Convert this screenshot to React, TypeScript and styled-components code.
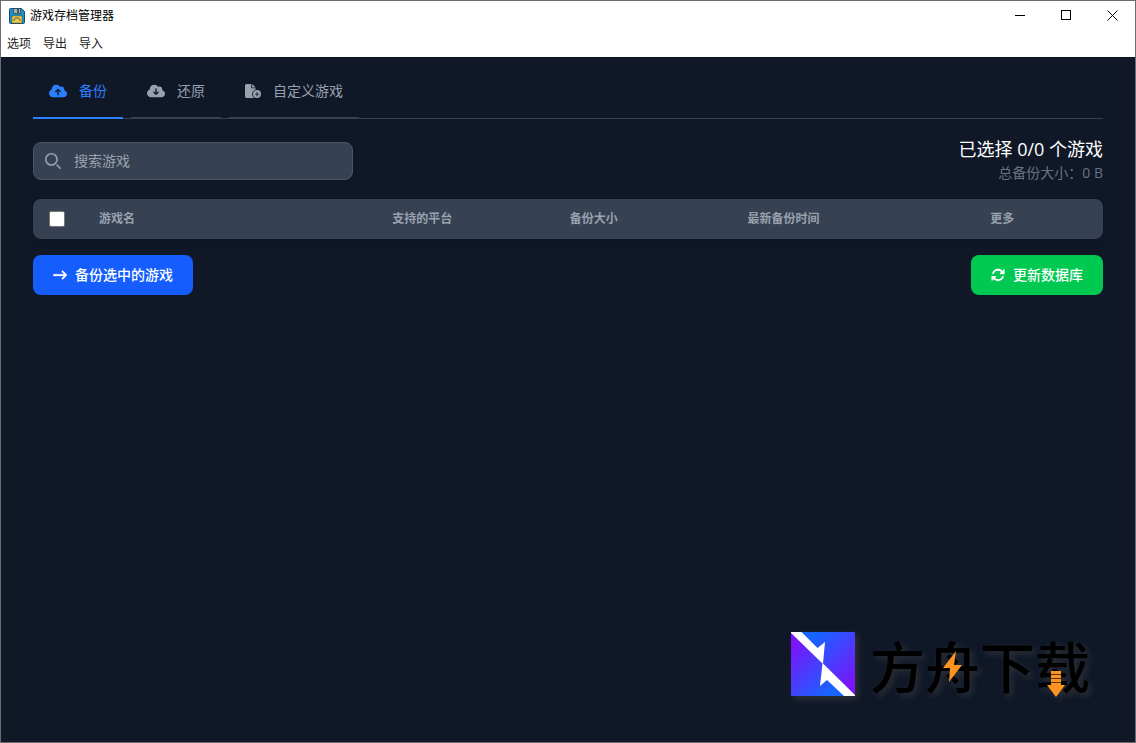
import React from 'react';
import styled, { createGlobalStyle } from 'styled-components';
import { FaCloudArrowUp, FaCloudArrowDown, FaFileCirclePlus, FaArrowRightLong, FaRotate } from 'react-icons/fa6';

const GlobalStyle = createGlobalStyle`
  *, *::before, *::after { box-sizing: border-box; }
  body {
    margin: 0;
    background: #101828;
    font-family: "Open Sans", "Noto Sans CJK SC", sans-serif;
    font-size: 14px;
    line-height: 20px;
  }
  button, input { font: inherit; }
`;

const Window = styled.div`
  position: relative;
  display: flex;
  flex-direction: column;
  min-height: 100vh;
  border: 1px solid #6c6c6c;
  background: #101828;
`;

const TitleBar = styled.header`
  display: flex;
  align-items: center;
  height: 29px;
  padding-left: 8px;
  background: #fff;
`;

const Title = styled.h1`
  flex: 1;
  margin: 0 0 0 5px;
  color: #000;
  font-size: 12px;
  font-weight: 400;
  line-height: 18px;
`;

const WindowButton = styled.button`
  display: flex;
  align-items: center;
  justify-content: center;
  width: 46px;
  height: 29px;
  padding: 0;
  border: 0;
  background: transparent;
`;

const MenuBar = styled.nav`
  display: flex;
  align-items: center;
  gap: 12px;
  height: 27px;
  padding: 0 6px;
  background: #fff;
`;

const MenuItem = styled.button`
  padding: 0;
  border: 0;
  background: transparent;
  color: #222;
  font-size: 12px;
  line-height: 18px;
`;

const Main = styled.main`
  flex: 1;
  padding: 8px 32px 32px;
`;

const TabList = styled.div`
  display: flex;
  gap: 8px;
  margin-bottom: 16px;
  border-bottom: 1px solid #364153;
`;

const Tab = styled.button<{ $active?: boolean; $iconWidth: number }>`
  display: flex;
  align-items: center;
  gap: 12px;
  margin-bottom: -1px;
  padding: 16px;
  border: 0;
  border-bottom: 2px solid ${(p) => (p.$active ? '#2b7fff' : '#364153')};
  background: transparent;
  color: ${(p) => (p.$active ? '#2b7fff' : '#99a1af')};
  white-space: nowrap;

  svg {
    flex: none;
    width: ${(p) => p.$iconWidth}px;
    height: 16px;
  }
`;

const Toolbar = styled.div`
  display: flex;
  align-items: center;
  justify-content: space-between;
  margin-bottom: 16px;
`;

const SearchBox = styled.label`
  display: flex;
  align-items: center;
  gap: 13px;
  width: 320px;
  height: 38px;
  margin-top: 4px;
  padding: 0 11px;
  border: 1px solid #4a5565;
  border-radius: 8px;
  background: #364153;
  color: #99a1af;
`;

const SearchInput = styled.input`
  flex: 1;
  min-width: 0;
  padding: 0;
  border: 0;
  outline: 0;
  background: transparent;
  color: #fff;

  &::placeholder { color: #99a1af; opacity: 1; }
`;

const Summary = styled.div`
  text-align: right;
`;

const Selected = styled.p`
  margin: 0;
  color: #fff;
  font-size: 18px;
  line-height: 28px;
`;

const TotalSize = styled.p`
  margin: 0;
  color: #6a7282;
`;

const GameTable = styled.table`
  width: 100%;
  margin-bottom: 16px;
  border-collapse: collapse;
  table-layout: fixed;
  border-radius: 8px;
  background: #364153;
  box-shadow: 0 4px 6px rgba(0, 0, 0, 0.15);
`;

const HeadCell = styled.th<{ $width?: string }>`
  width: ${(p) => p.$width ?? 'auto'};
  height: 40px;
  padding: 0 16px;
  color: #99a1af;
  font-size: 12px;
  font-weight: 700;
  line-height: 16px;
  text-align: left;
`;

const Checkbox = styled.input`
  display: block;
  appearance: none;
  width: 16px;
  height: 16px;
  margin: 0;
  border: 1px solid #767676;
  border-radius: 2px;
  background: #fff;

  &:checked { background: #155dfc; }
`;

const Actions = styled.div`
  display: flex;
  justify-content: space-between;
`;

const ActionButton = styled.button<{ $color: string }>`
  display: flex;
  align-items: center;
  gap: 8px;
  height: 40px;
  padding: 0 20px;
  border: 0;
  border-radius: 8px;
  background: ${(p) => p.$color};
  color: #fff;
  font-weight: 500;
`;

const Watermark = styled.div`
  position: absolute;
  right: 45px;
  bottom: 46px;
  display: flex;
  gap: 15px;
  filter: drop-shadow(3px 3px 3px rgba(120, 110, 90, 0.28));
`;

const Wordmark = styled.div`
  position: relative;
  color: #000;
  font-family: "Noto Sans CJK SC", sans-serif;
  font-size: 55px;
  font-weight: 500;
  line-height: 64px;
  white-space: nowrap;
`;

const WordmarkAccents = styled.svg`
  position: absolute;
  top: 0;
  left: 0;
`;

const DiskIcon = () => (
  <svg width="16" height="16" viewBox="0 0 16 16" aria-hidden="true">
    <path d="M1.500 .5h11l3 3v11a1 1 0 0 1-1 1h-13a1 1 0 0 1-1-1v-13a1 1 0 0 1 1-1z" fill="#1790c8" stroke="#17506f" />
    <path d="M4 1h8v5H4z" fill="#4b5a61" />
    <path d="M5 1h3v4H5zM10 1h1v4h-1z" fill="#a9b3b6" />
    <path d="M3 8h10v7H3z" fill="#f0cf45" stroke="#6b5b25" strokeWidth=".6" />
    <path d="M5 13c0-4 6-4 6 0" fill="none" stroke="#8d8350" strokeWidth="1.500" />
  </svg>
);

const SearchIcon = () => (
  <svg width="16" height="16" viewBox="0 0 20 20" fill="none" stroke="currentColor" strokeWidth="2" strokeLinecap="round" aria-hidden="true">
    <path d="m19 19-4-4m0-7A7 7 0 1 1 1 8a7 7 0 0 1 14 0Z" />
  </svg>
);

const LogoMark = () => (
  <svg width="64" height="64" viewBox="0 0 64 64" aria-hidden="true">
    <defs>
      <linearGradient id="upper" gradientUnits="userSpaceOnUse" x1="14" y1="0" x2="64" y2="50">
        <stop offset=".15" stopColor="#1764ff" />
        <stop offset="1" stopColor="#7b14fa" />
      </linearGradient>
      <linearGradient id="lower" gradientUnits="userSpaceOnUse" x1="0" y1="14" x2="50" y2="64">
        <stop offset="0" stopColor="#7b14fa" />
        <stop offset=".85" stopColor="#1764ff" />
      </linearGradient>
    </defs>
    <path d="M0 0h64v64z" fill="url(#upper)" />
    <path d="M0 0v64h64z" fill="url(#lower)" />
    <path d="M0 0h10.500l16 16L34 10l-2 21.500L64 63v1H53L36 48l-7 6 2.500-22.500L0 1z" fill="#fff" />
  </svg>
);

const columns = [
  { label: '游戏名', width: '27.4%' },
  { label: '支持的平台', width: '16.6%' },
  { label: '备份大小', width: '16.6%' },
  { label: '最新备份时间', width: '22.7%' },
  { label: '更多' },
];

export default function App() {
  return (
    <>
      <GlobalStyle />
      <Window>
        <TitleBar>
          <DiskIcon />
          <Title>游戏存档管理器</Title>
          <WindowButton aria-label="最小化">
            <svg width="11" height="11" shapeRendering="crispEdges"><path d="M0 5.500h10" stroke="#000" /></svg>
          </WindowButton>
          <WindowButton aria-label="最大化">
            <svg width="11" height="11" shapeRendering="crispEdges"><path d="M.5 .5h9v9h-9z" fill="none" stroke="#000" /></svg>
          </WindowButton>
          <WindowButton aria-label="关闭">
            <svg width="11" height="11"><path d="M.5 .5l10 10M10.500 .5l-10 10" stroke="#000" /></svg>
          </WindowButton>
        </TitleBar>
        <MenuBar>
          <MenuItem>选项</MenuItem>
          <MenuItem>导出</MenuItem>
          <MenuItem>导入</MenuItem>
        </MenuBar>
        <Main>
          <TabList role="tablist">
            <Tab role="tab" aria-selected="true" $active $iconWidth={18}><FaCloudArrowUp />备份</Tab>
            <Tab role="tab" aria-selected="false" $iconWidth={18}><FaCloudArrowDown />还原</Tab>
            <Tab role="tab" aria-selected="false" $iconWidth={16}><FaFileCirclePlus />自定义游戏</Tab>
          </TabList>
          <Toolbar>
            <SearchBox>
              <SearchIcon />
              <SearchInput type="text" placeholder="搜索游戏" aria-label="搜索游戏" />
            </SearchBox>
            <Summary>
              <Selected>已选择 0/0 个游戏</Selected>
              <TotalSize>总备份大小：0 B</TotalSize>
            </Summary>
          </Toolbar>
          <GameTable>
            <thead>
              <tr>
                <HeadCell $width="50px"><Checkbox type="checkbox" aria-label="全选" /></HeadCell>
                {columns.map((c) => (
                  <HeadCell key={c.label} $width={c.width} scope="col">{c.label}</HeadCell>
                ))}
              </tr>
            </thead>
          </GameTable>
          <Actions>
            <ActionButton $color="#155dfc"><FaArrowRightLong strokeWidth={10} />备份选中的游戏</ActionButton>
            <ActionButton $color="#00c951"><FaRotate />更新数据库</ActionButton>
          </Actions>
        </Main>
        <Watermark>
          <LogoMark />
          <Wordmark>
            方舟下载
            <WordmarkAccents width="220" height="68" viewBox="0 0 220 68" aria-hidden="true">
              <path d="M86 19L73 36h7l-1 14 13-17h-8z" fill="#ff9320" />
              <path d="M181 39h10v14h4l-9 12-9-12h4z" fill="#ff9320" />
              <path d="M181 42.500h10M181 46.500h10M181 50.500h10" stroke="#5a3208" />
            </WordmarkAccents>
          </Wordmark>
        </Watermark>
      </Window>
    </>
  );
}
